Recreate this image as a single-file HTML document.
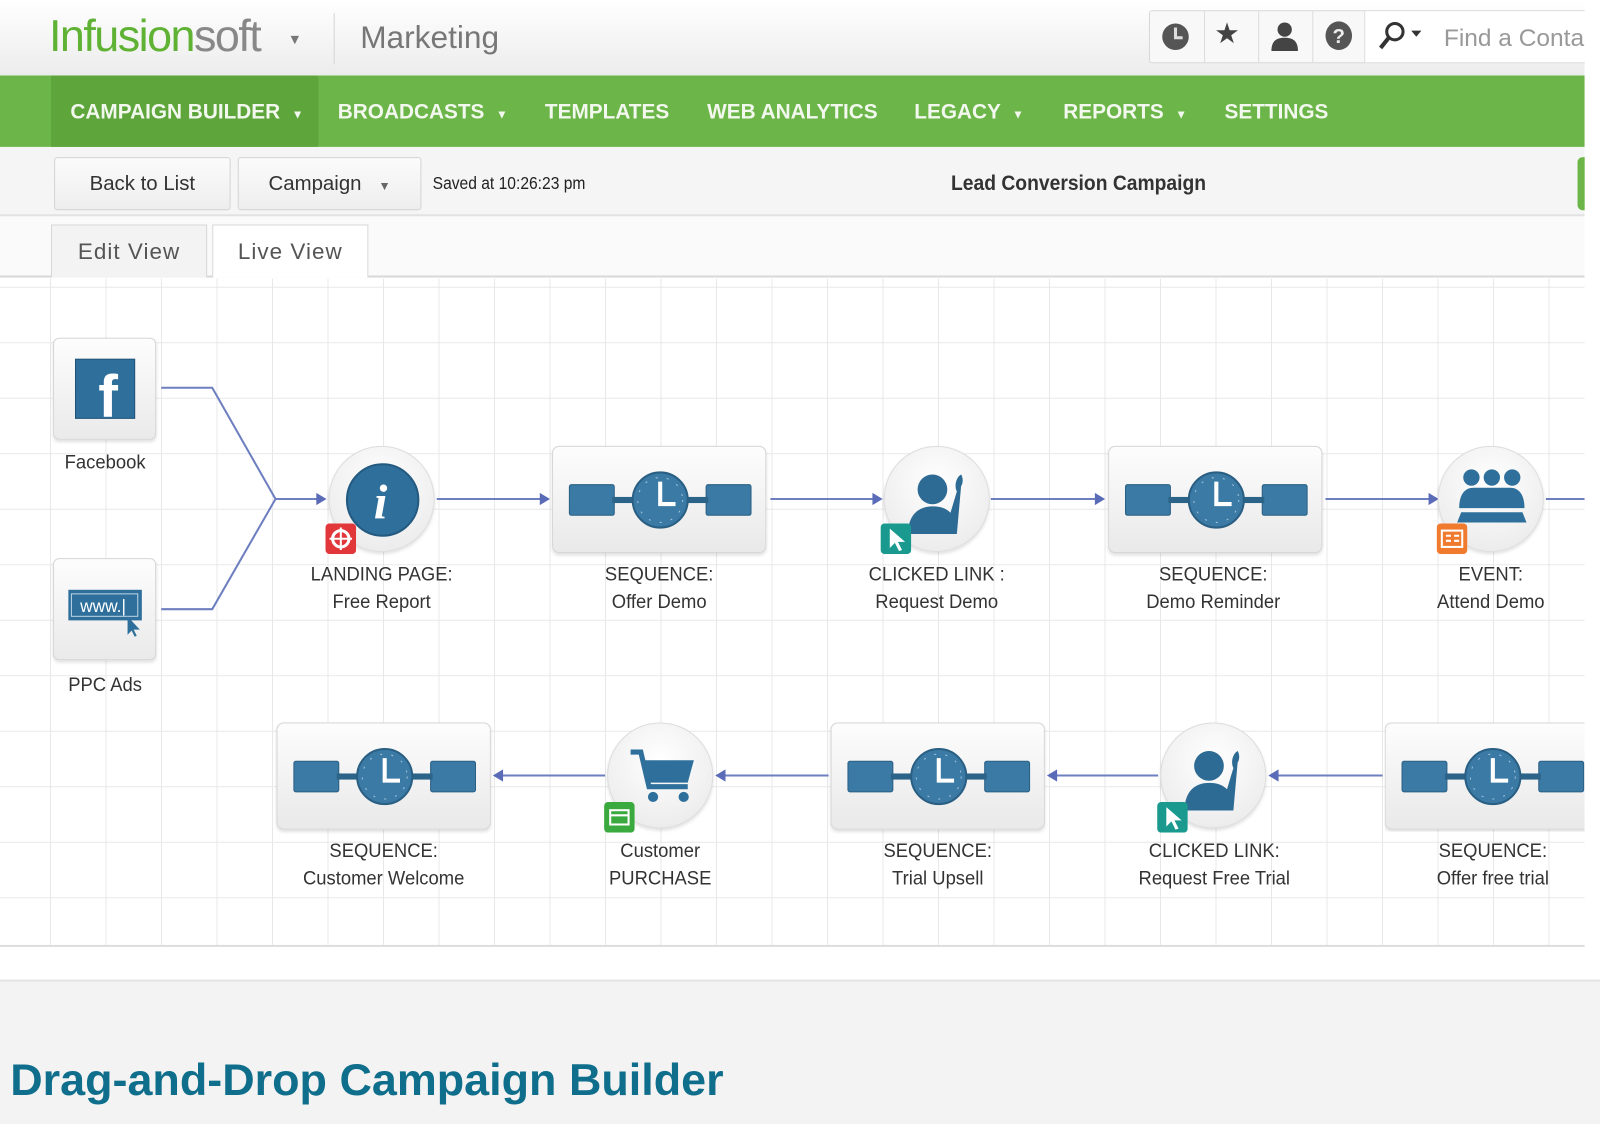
<!DOCTYPE html>
<html><head><meta charset="utf-8"><style>
*{margin:0;padding:0;box-sizing:border-box}
body{width:1600px;height:1102px;overflow:hidden;background:#fff;font-family:"Liberation Sans",Arial,sans-serif;position:relative}
#wrap{position:absolute;left:0;top:0;width:1568px;height:1080px;transform:scale(1.0204);transform-origin:0 0}
.a{position:absolute}
#hdr{left:0;top:0;width:1553px;height:74px;background:linear-gradient(#fff,#ececec)}
#nav{left:0;top:74px;width:1553px;height:70px;background:#6cb548}
#nav .it{position:absolute;top:0;height:70px;line-height:72px;color:#f2f8ee;font-size:21px;font-weight:bold;transform:scaleX(.97);transform-origin:left}
#tb{left:0;top:144px;width:1553px;height:68px;background:#f5f5f5;border-bottom:2px solid #e2e2e2}
.btn{position:absolute;border:1px solid #d4d4d4;border-radius:3px;background:linear-gradient(#fbfbfb,#eee);font-size:20px;color:#333;text-align:center}
#tabs{left:0;top:212px;width:1553px;height:60px;background:#fafafa;border-bottom:2px solid #d8d8d8}
.tab{position:absolute;top:8px;height:52px;border:1px solid #d8d8d8;border-bottom:none;background:#fff;font-size:22px;color:#555;text-align:center;line-height:52px;letter-spacing:1px}
#cv{left:0;top:273px;width:1553px;height:655px;background-color:#fff;background-image:linear-gradient(90deg,#e8e8e8 1px,transparent 1px),linear-gradient(#e8e8e8 1px,transparent 1px);background-size:54.4px 54.4px;background-position:49px 8px;border-bottom:2px solid #ddd}
.lbl{position:absolute;width:240px;text-align:center;font-size:19px;line-height:27px;color:#333;transform:scaleX(.95)}
.sq{position:absolute;width:210px;height:105px;border:1px solid #d6d6d6;border-radius:7px;background:linear-gradient(#fdfdfd,#e9e9e9);box-shadow:0 2px 3px rgba(0,0,0,.12)}
.ci{position:absolute;width:104px;height:104px;border-radius:50%;background:radial-gradient(circle at 50% 35%,#fff,#e7e7e7);border:1px solid #ddd;box-shadow:0 2px 3px rgba(0,0,0,.12)}
.src{position:absolute;width:101px;height:100px;border:1px solid #d6d6d6;border-radius:6px;background:linear-gradient(#fdfdfd,#eaeaea);box-shadow:0 2px 3px rgba(0,0,0,.12)}
</style></head><body>
<svg width="0" height="0" style="position:absolute">
<defs>
<symbol id="seq" viewBox="0 0 210 105">
<rect x="16" y="37" width="44" height="30" rx="2" fill="#3b7aa5" stroke="#2a5f84"/>
<rect x="150" y="37" width="44" height="30" rx="2" fill="#3b7aa5" stroke="#2a5f84"/>
<rect x="58" y="49" width="94" height="6" fill="#2c6489"/>
<circle cx="105" cy="52" r="27" fill="#3b7aa5" stroke="#2a5f84" stroke-width="2"/>
<circle cx="105" cy="52" r="22" fill="none" stroke="#9fc3dc" stroke-width="1" stroke-dasharray="2 9"/>
<path d="M105 34V56H120" stroke="#fff" stroke-width="4" fill="none"/>
</symbol>
<symbol id="hand" viewBox="0 0 100 100">
<circle cx="45" cy="40" r="14" fill="#2d6a94"/>
<path d="M22 82c0-18 10-26 23-26 8 0 13 2 17 6l6-20c-3-6 0-14 4-16 2 3 2 8 0 11l-4 45z" fill="#2d6a94"/>
</symbol>
<symbol id="ptr" viewBox="0 0 30 30"><rect width="30" height="30" rx="4" fill="#1a9a8e"/><path d="M9 5v19l5-5 4 8 3-1-4-8h7z" fill="#fff"/></symbol>
</defs></svg>
<div id="wrap">
<div id="hdr" class="a">
<div class="a" style="left:48px;top:11px;font-size:44px;letter-spacing:-1.5px;color:#5fb234">Infusion<span style="color:#888;font-weight:normal">soft</span></div>
<div class="a" style="left:282px;top:30px;font-size:14px;color:#777">▼</div>
<div class="a" style="left:327px;top:13px;width:1px;height:50px;background:#d5d5d5"></div>
<div class="a" style="left:353px;top:19px;font-size:31px;color:#777">Marketing</div>
<div class="a" style="left:1126px;top:10px;width:430px;height:52px;border:1px solid #d8d8d8;border-radius:3px;background:#f8f8f8"></div>
<div class="a" style="left:1180px;top:11px;width:1px;height:50px;background:#ddd"></div>
<div class="a" style="left:1233px;top:11px;width:1px;height:50px;background:#ddd"></div>
<div class="a" style="left:1286px;top:11px;width:1px;height:50px;background:#ddd"></div>
<div class="a" style="left:1337px;top:11px;width:1px;height:50px;background:#ddd"></div>
<div class="a" style="left:1338px;top:11px;width:215px;height:50px;background:#fff"></div>
<svg class="a" style="left:1137px;top:21px" width="30" height="30"><circle cx="15" cy="15" r="13" fill="#555"/><path d="M15 6v10h7" stroke="#ddd" stroke-width="3" fill="none"/></svg>
<div class="a" style="left:1190px;top:16px;font-size:28px;color:#444">★</div>
<svg class="a" style="left:1243px;top:19px" width="32" height="32"><circle cx="16" cy="10" r="7" fill="#444"/><path d="M3 31c0-10 5-13 13-13s13 3 13 13z" fill="#444"/></svg>
<svg class="a" style="left:1296px;top:19px" width="32" height="32"><ellipse cx="16" cy="16" rx="13" ry="14" fill="#555"/><text x="16" y="23" font-size="20" font-weight="bold" fill="#eee" text-anchor="middle" font-family="Liberation Sans">?</text></svg>
<svg class="a" style="left:1350px;top:20px" width="48" height="30"><circle cx="17" cy="11" r="8" fill="none" stroke="#333" stroke-width="3"/><path d="M11 17l-8 10" stroke="#333" stroke-width="4"/><path d="M33 10h10l-5 6z" fill="#333"/></svg>
<div class="a" style="left:1415px;top:24px;font-size:24px;color:#999;white-space:nowrap;width:138px;overflow:hidden">Find a Contact</div>
</div>

<div id="nav" class="a">
<div class="a" style="left:50px;top:0;width:262px;height:70px;background:#5ea63b"></div>
<div class="it" style="left:69px">CAMPAIGN BUILDER &nbsp;<span style="font-size:12px">▼</span></div>
<div class="it" style="left:331px">BROADCASTS &nbsp;<span style="font-size:12px">▼</span></div>
<div class="it" style="left:534px">TEMPLATES</div>
<div class="it" style="left:693px">WEB ANALYTICS</div>
<div class="it" style="left:896px">LEGACY &nbsp;<span style="font-size:12px">▼</span></div>
<div class="it" style="left:1042px">REPORTS &nbsp;<span style="font-size:12px">▼</span></div>
<div class="it" style="left:1200px">SETTINGS</div>
</div>

<div id="tb" class="a">
<div class="btn" style="left:53px;top:10px;width:173px;height:52px;line-height:50px">Back to List</div>
<div class="btn" style="left:233px;top:10px;width:180px;height:52px;line-height:50px">Campaign &nbsp;&nbsp;<span style="font-size:12px;color:#666">▼</span></div>
<div class="a" style="left:424px;top:26px;font-size:17px;color:#222;transform:scaleX(.9);transform-origin:left">Saved at 10:26:23 pm</div>
<div class="a" style="left:932px;top:24px;font-size:21px;color:#333;font-weight:bold;transform:scaleX(.9);transform-origin:left">Lead Conversion Campaign</div>
<div class="a" style="left:1546px;top:10px;width:10px;height:52px;border-radius:5px 0 0 5px;background:#6cb548"></div>
</div>

<div id="tabs" class="a">
<div class="tab" style="left:50px;width:153px;background:#f3f3f3">Edit View</div>
<div class="tab" style="left:208px;width:153px">Live View</div>
</div>

<div id="cv" class="a"></div>

<svg class="a" style="left:0;top:0" width="1600" height="1102">
<g stroke="#6e7fc0" stroke-width="2" fill="none">
<path d="M158 380H208L270 489L208 597H158"/>
<path d="M270 489H314"/>
<path d="M428 489H532"/>
<path d="M755 489H858"/>
<path d="M971 489H1077"/>
<path d="M1299 489H1403"/>
<path d="M1515 489H1553"/>
<path d="M1355 760H1250"/>
<path d="M1135 760H1032"/>
<path d="M812 760H708"/>
<path d="M593 760H490"/>
</g>
<g fill="#5a6cb8">
<path d="M320 489l-10-6v12z"/><path d="M539 489l-10-6v12z"/><path d="M865 489l-10-6v12z"/><path d="M1083 489l-10-6v12z"/><path d="M1410 489l-10-6v12z"/>
<path d="M1243 760l10-6v12z"/><path d="M1026 760l10-6v12z"/><path d="M701 760l10-6v12z"/><path d="M483 760l10-6v12z"/>
</g>
</svg>

<div class="src" style="left:52px;top:331px"><svg width="101" height="100"><rect x="21" y="20" width="58" height="58" fill="#2f6f9b" stroke="#1e5378"/><text x="53" y="76" font-size="58" font-weight="bold" fill="#fff" font-family="Liberation Sans" text-anchor="middle">f</text></svg></div>
<div class="lbl" style="left:-17px;top:440px">Facebook</div>
<div class="src" style="left:52px;top:547px"><svg width="101" height="100"><rect x="14" y="30" width="72" height="30" fill="#2f6f9b"/><rect x="17" y="34" width="65" height="22" fill="#2f6f9b" stroke="#bcd4e4"/><text x="48" y="52" font-size="17" fill="#fff" font-family="Liberation Sans" text-anchor="middle">www.|</text><path d="M72 56v18l4-4 3 6 2-1-3-6h6z" fill="#2f6f9b"/></svg></div>
<div class="lbl" style="left:-17px;top:658px">PPC Ads</div>

<div class="ci" style="left:322px;top:437px"><svg width="104" height="104"><circle cx="52" cy="52" r="35" fill="#2f6f9b" stroke="#245a80" stroke-width="2"/><text x="50" y="70" font-size="48" font-style="italic" font-weight="bold" fill="#fff" font-family="Liberation Serif" text-anchor="middle">i</text></svg></div>
<svg class="a" style="left:319px;top:513px" width="30" height="30"><rect width="30" height="30" rx="4" fill="#e2373a"/><circle cx="15" cy="15" r="8" fill="none" stroke="#fff" stroke-width="3"/><path d="M15 4v22M4 15h22" stroke="#fff" stroke-width="2"/></svg>
<div class="lbl" style="left:254px;top:550px">LANDING PAGE:<br>Free Report</div>

<div class="sq" style="left:541px;top:437px"><svg width="210" height="105"><use href="#seq"/></svg></div>
<div class="lbl" style="left:526px;top:550px">SEQUENCE:<br>Offer Demo</div>

<div class="ci" style="left:866px;top:437px"><svg width="104" height="104" viewBox="0 0 100 100"><use href="#hand"/></svg></div>
<svg class="a" style="left:863px;top:513px" width="30" height="30"><use href="#ptr"/></svg>
<div class="lbl" style="left:798px;top:550px">CLICKED LINK :<br>Request Demo</div>

<div class="sq" style="left:1086px;top:437px"><svg width="210" height="105"><use href="#seq"/></svg></div>
<div class="lbl" style="left:1069px;top:550px">SEQUENCE:<br>Demo Reminder</div>

<div class="ci" style="left:1409px;top:437px"><svg width="104" height="104"><g fill="#2f6f9b"><circle cx="32" cy="30" r="8"/><circle cx="52" cy="30" r="8"/><circle cx="72" cy="30" r="8"/><path d="M20 60c0-14 6-20 14-20h36c8 0 14 6 14 20z"/><path d="M22 64h60l4 10H18z"/></g></svg></div>
<svg class="a" style="left:1408px;top:513px" width="30" height="30"><rect width="30" height="30" rx="4" fill="#f07a2e"/><rect x="5" y="7" width="20" height="16" fill="none" stroke="#fff" stroke-width="2"/><path d="M9 12h5M9 17h5M17 12h5M17 17h5" stroke="#fff" stroke-width="2"/></svg>
<div class="lbl" style="left:1341px;top:550px">EVENT:<br>Attend Demo</div>

<div class="sq" style="left:271px;top:708px"><svg width="210" height="105"><use href="#seq"/></svg></div>
<div class="lbl" style="left:256px;top:821px">SEQUENCE:<br>Customer Welcome</div>

<div class="ci" style="left:595px;top:708px"><svg width="104" height="104"><g fill="none" stroke="#2f6f9b" stroke-width="5"><path d="M22 28h10l8 34h38"/></g><path d="M34 36h50l-6 22H39z" fill="#2f6f9b"/><circle cx="44" cy="72" r="5" fill="#2f6f9b"/><circle cx="74" cy="72" r="5" fill="#2f6f9b"/></svg></div>
<svg class="a" style="left:592px;top:786px" width="30" height="30"><rect width="30" height="30" rx="4" fill="#3aaa3e"/><rect x="6" y="8" width="18" height="14" fill="none" stroke="#fff" stroke-width="2"/><path d="M6 13h18" stroke="#fff" stroke-width="2"/></svg>
<div class="lbl" style="left:527px;top:821px">Customer<br>PURCHASE</div>

<div class="sq" style="left:814px;top:708px"><svg width="210" height="105"><use href="#seq"/></svg></div>
<div class="lbl" style="left:799px;top:821px">SEQUENCE:<br>Trial Upsell</div>

<div class="ci" style="left:1137px;top:708px"><svg width="104" height="104" viewBox="0 0 100 100"><use href="#hand"/></svg></div>
<svg class="a" style="left:1134px;top:786px" width="30" height="30"><use href="#ptr"/></svg>
<div class="lbl" style="left:1070px;top:821px">CLICKED LINK:<br>Request Free Trial</div>

<div class="a" style="left:1357px;top:708px;width:196px;height:107px;overflow:hidden"><div class="sq" style="left:0;top:0"><svg width="210" height="105"><use href="#seq"/></svg></div></div>
<div class="lbl" style="left:1343px;top:821px">SEQUENCE:<br>Offer free trial</div>

<div class="a" style="left:1553px;top:0;width:47px;height:930px;background:#fff"></div>

<div class="a" style="left:0;top:960px;width:1600px;height:142px;background:#f3f3f3;border-top:2px solid #e4e4e4"></div>
<div class="a" style="left:10px;top:1034px;font-size:44px;font-weight:bold;color:#0f6e8b;white-space:nowrap">Drag-and-Drop Campaign Builder</div>
</div>
</body></html>
